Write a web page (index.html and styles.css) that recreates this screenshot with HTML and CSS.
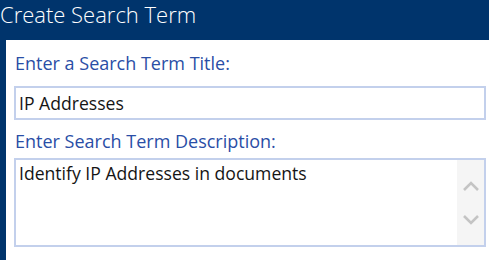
FILE: index.html
```html
<!DOCTYPE html>
<html lang="en">
<head>
  <meta charset="UTF-8">
  <title>Create Search Term</title>
  <link rel="stylesheet" href="styles.css">
</head>
<body>

  <div class="dialog-title">Create Search Term</div>

  <div class="panel">
    <label class="field-label">Enter a Search Term Title:</label>
    <div class="text-box">IP Addresses</div>

    <label class="field-label desc-label">Enter Search Term Description:</label>
    <div class="text-area">
      <div class="text-area-content">Identify IP Addresses in documents</div>
      <div class="scroller">
        <svg width="18" height="12" viewBox="0 0 18 12"><path d="M2 10 L9 3 L16 10" fill="none" stroke="#c4c4c4" stroke-width="2.6"/></svg>
        <svg width="18" height="12" viewBox="0 0 18 12"><path d="M2 2 L9 9 L16 2" fill="none" stroke="#c4c4c4" stroke-width="2.6"/></svg>
      </div>
    </div>
  </div>

</body>
</html>
```

FILE: styles.css
```css
body {
  margin: 0;
  background: #00346c;
  font-family: 'Open Sans', 'Noto Sans', sans-serif;
  height: 260px;
  overflow: hidden;
}

.dialog-title {
  color: #ffffff;
  font-size: 22px;
  font-weight: 300;
  height: 40px;
  line-height: 28px;
  white-space: nowrap;
}

.panel {
  margin-left: 6px;
  background: #ffffff;
  height: 220px;
  padding: 11px 3px 0 8px;
  box-sizing: border-box;
}

.field-label {
  display: block;
  color: #2a4ea6;
  font-size: 18px;
  line-height: 24px;
  margin: 0 0 11px 1px;
}

.desc-label {
  margin-bottom: 5px;
}

.text-box {
  border: 2px solid #c3d0ec;
  height: 34px;
  box-sizing: border-box;
  line-height: 30px;
  padding-left: 3px;
  font-size: 17.6px;
  color: #151515;
  margin-bottom: 9px;
}

.text-area {
  display: flex;
  border: 2px solid #c3d0ec;
  height: 89px;
  box-sizing: border-box;
  font-size: 17.6px;
  line-height: 24px;
  color: #151515;
}

.text-area-content {
  flex: 1;
  padding: 1px 0 0 3px;
}

.scroller {
  width: 27px;
  background: #f5f5f5;
  display: flex;
  flex-direction: column;
  align-items: center;
  padding-top: 20px;
  gap: 22px;
}
```
